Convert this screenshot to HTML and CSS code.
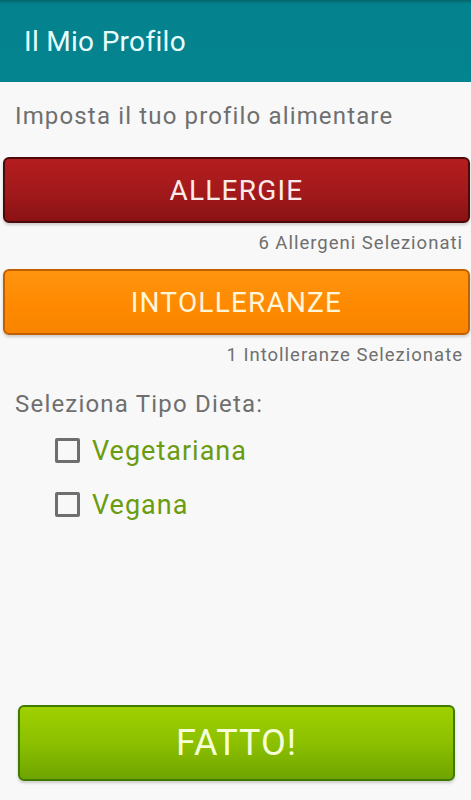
FILE: index.html
```html
<!DOCTYPE html>
<html lang="it">
<head>
<meta charset="utf-8">
<title>Il Mio Profilo</title>
<link rel="stylesheet" href="styles.css">
</head>
<body>
<header class="appbar">
  <h1 class="appbar-title">Il Mio Profilo</h1>
</header>
<main class="content">
  <p class="intro">Imposta il tuo profilo alimentare</p>
  <button class="btn btn-red">ALLERGIE</button>
  <p class="count">6 Allergeni Selezionati</p>
  <button class="btn btn-orange">INTOLLERANZE</button>
  <p class="count">1 Intolleranze Selezionate</p>
  <p class="section">Seleziona Tipo Dieta:</p>
  <ul class="diets">
    <li class="diet"><span class="box"></span><span class="diet-label">Vegetariana</span></li>
    <li class="diet"><span class="box"></span><span class="diet-label">Vegana</span></li>
  </ul>
  <div class="spacer"></div>
  <div class="footer">
    <button class="btn btn-green">FATTO!</button>
  </div>
</main>
</body>
</html>
```

FILE: styles.css
```css
* { box-sizing: border-box; }
html, body { margin: 0; padding: 0; }
body {
  width: 471px;
  height: 800px;
  background: #f8f8f8;
  font-family: Roboto, "Liberation Sans", sans-serif;
  display: flex;
  flex-direction: column;
  overflow: hidden;
}
.appbar {
  height: 82px;
  background: linear-gradient(#03646c, #04838e 4px, #04848f);
  display: flex;
  align-items: center;
  padding-left: 24px;
  flex-shrink: 0;
}
.appbar-title {
  margin: 0;
  font-size: 28px;
  font-weight: 400;
  letter-spacing: 0.3px;
  color: #e9ffff;
}
.content {
  flex: 1;
  display: flex;
  flex-direction: column;
}
.intro {
  margin: 19px 0 0 15px;
  font-size: 24px;
  line-height: 30px;
  letter-spacing: 1.15px;
  color: #6f6f6f;
}
.btn {
  display: block;
  border-radius: 6px;
  font-family: Roboto, "Liberation Sans", sans-serif;
  font-weight: 400;
  text-align: center;
  padding: 0;
  cursor: pointer;
}
.btn-red, .btn-orange {
  margin: 0 1px 0 3px;
  width: 467px;
  height: 66px;
  font-size: 28px;
  letter-spacing: 1.2px;
}
.btn-red {
  margin-top: 26px;
  background: linear-gradient(#b41d1f, #a2191b 55%, #8a1214);
  border: 2px solid #4c0a0a;
  color: #fbeaea;
  box-shadow: 0 2px 3px rgba(0,0,0,0.18);
}
.btn-orange {
  margin-top: 14px;
  background: linear-gradient(#ff9410, #ff8a00 55%, #f78400);
  border: 2px solid #c06000;
  color: #fff5d8;
  box-shadow: 0 2px 3px rgba(0,0,0,0.18);
}
.count {
  margin: 8px 8px 0 0;
  text-align: right;
  font-size: 18.5px;
  line-height: 24px;
  letter-spacing: 1px;
  color: #6f6f6f;
}
.section {
  margin: 22px 0 0 15px;
  font-size: 24px;
  line-height: 30px;
  letter-spacing: 1.2px;
  color: #6f6f6f;
}
.diets {
  list-style: none;
  margin: 15px 0 0 55px;
  padding: 0;
  display: flex;
  flex-direction: column;
  gap: 21px;
}
.diet {
  display: flex;
  align-items: center;
  gap: 12px;
  height: 33px;
}
.box {
  width: 25px;
  height: 25px;
  border: 3px solid #6e6e6e;
  border-radius: 2px;
  background: #f8f8f8;
}
.diet-label {
  font-size: 27px;
  letter-spacing: 1px;
  color: #6a9c10;
}
.spacer { flex: 1; }
.footer {
  padding: 0 16px 19px 18px;
}
.btn-green {
  width: 100%;
  height: 76px;
  font-size: 36px;
  letter-spacing: 1px;
  background: linear-gradient(#9fd000, #8cc000 50%, #6ea400);
  border: 2px solid #3e7a00;
  color: #f6ffd8;
  box-shadow: 0 2px 3px rgba(0,0,0,0.18);
}
```
